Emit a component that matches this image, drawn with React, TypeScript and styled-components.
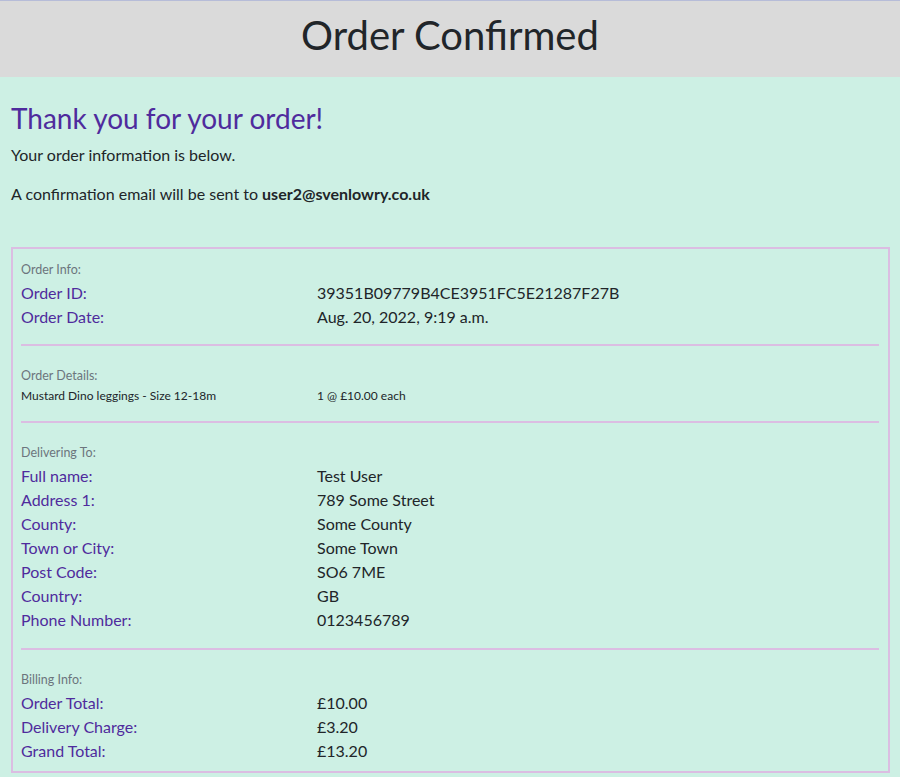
import styled, { createGlobalStyle } from "styled-components";

const GlobalStyle = createGlobalStyle`
    html, body {
        margin: 0;
        padding: 0;
        background: #cdf0e4;
        font-family: "Lato", "Noto Sans", sans-serif;
        color: #212529;
    }
    *, *::before, *::after {
        box-sizing: border-box;
    }
`;

const orderInfo = [
    ["Order ID:", "39351B09779B4CE3951FC5E21287F27B"],
    ["Order Date:", "Aug. 20, 2022, 9:19 a.m."],
];

const delivery = [
    ["Full name:", "Test User"],
    ["Address 1:", "789 Some Street"],
    ["County:", "Some County"],
    ["Town or City:", "Some Town"],
    ["Post Code:", "SO6 7ME"],
    ["Country:", "GB"],
    ["Phone Number:", "0123456789"],
];

const billing = [
    ["Order Total:", "£10.00"],
    ["Delivery Charge:", "£3.20"],
    ["Grand Total:", "£13.20"],
];

export default function App() {
    return (
        <Page>
            <GlobalStyle />
            <Header>
                <h1>Order Confirmed</h1>
            </Header>
            <Content>
                <Title>Thank you for your order!</Title>
                <Lead>Your order information is below.</Lead>
                <Lead $gap>
                    A confirmation email will be sent to <strong>user2@svenlowry.co.uk</strong>
                </Lead>
                <Card>
                    <Section $top={11} $bottom={15}>
                        <SmallLabel>Order Info:</SmallLabel>
                        {orderInfo.map(([k, v]) => (
                            <Row key={k}>
                                <Label>{k}</Label>
                                <Value>{v}</Value>
                            </Row>
                        ))}
                    </Section>
                    <Rule />
                    <Section $top={20} $bottom={16}>
                        <SmallLabel>Order Details:</SmallLabel>
                        <Row $small>
                            <span>Mustard Dino leggings - Size 12-18m</span>
                            <span>1 @ £10.00 each</span>
                        </Row>
                    </Section>
                    <Rule />
                    <Section $top={20} $bottom={16}>
                        <SmallLabel>Delivering To:</SmallLabel>
                        {delivery.map(([k, v]) => (
                            <Row key={k}>
                                <Label>{k}</Label>
                                <Value>{v}</Value>
                            </Row>
                        ))}
                    </Section>
                    <Rule />
                    <Section $top={20} $bottom={8}>
                        <SmallLabel>Billing Info:</SmallLabel>
                        {billing.map(([k, v]) => (
                            <Row key={k}>
                                <Label>{k}</Label>
                                <Value>{v}</Value>
                            </Row>
                        ))}
                    </Section>
                </Card>
            </Content>
        </Page>
    );
}

const Page = styled.div`
    min-height: 100vh;
    background: #cdf0e4;
`;

const Header = styled.header`
    background: #dadada;
    border-top: 1px solid #b6bcd8;
    height: 77px;
    display: flex;
    align-items: center;
    justify-content: center;
    h1 {
        margin: 0;
        font-size: 40px;
        font-weight: 400;
        color: #212529;
        line-height: 1;
        padding-bottom: 8px;
    }
`;

const Content = styled.main`
    padding: 24px 11px 0;
`;

const Title = styled.h2`
    margin: 0 0 8px;
    font-size: 28px;
    font-weight: 400;
    line-height: 34px;
    color: #4f2b9d;
`;

const Lead = styled.p<{ $gap?: boolean }>`
    margin: ${(p) => (p.$gap ? "15px" : "0")} 0 0;
    font-size: 16px;
    line-height: 24px;
    strong {
        font-weight: 700;
    }
`;

const Card = styled.section`
    margin-top: 41px;
    width: 879px;
    border: 2px solid #dbbde2;
    padding: 0 9px 0 8px;
`;

const Section = styled.div<{ $top: number; $bottom: number }>`
    padding: ${(p) => p.$top}px 0 ${(p) => p.$bottom}px;
`;

const SmallLabel = styled.div`
    font-size: 12.5px;
    line-height: 20px;
    color: #6c757d;
    margin-bottom: 1px;
`;

const Row = styled.div<{ $small?: boolean }>`
    display: grid;
    grid-template-columns: 296px 1fr;
    font-size: ${(p) => (p.$small ? "12px" : "16px")};
    line-height: ${(p) => (p.$small ? "18px" : "24px")};
    color: #212529;
`;

const Label = styled.span`
    color: #4f2b9d;
`;

const Value = styled.span`
    color: #212529;
`;

const Rule = styled.hr`
    margin: 0;
    border: 0;
    height: 2px;
    background: #dbbde2;
`;
